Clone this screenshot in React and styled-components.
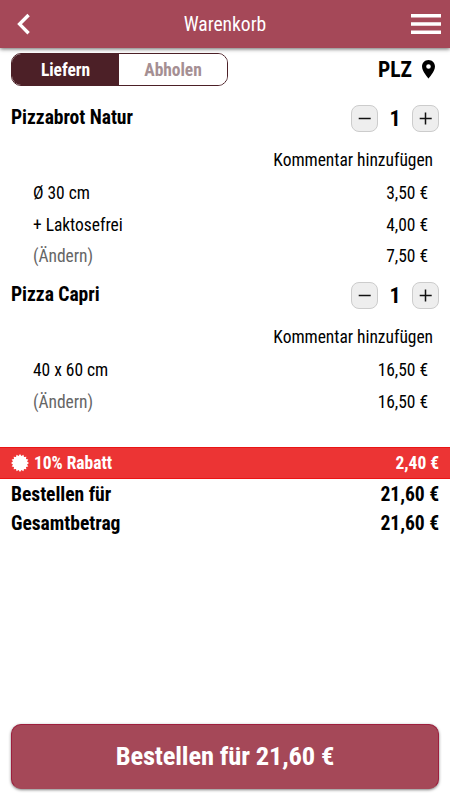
import styled, { createGlobalStyle } from 'styled-components';

const items = [
    {
        name: 'Pizzabrot Natur',
        amount: 1,
        lines: [
            { label: 'Ø 30 cm', price: '3,50 €' },
            { label: '+ Laktosefrei', price: '4,00 €' },
        ],
        total: '7,50 €',
    },
    {
        name: 'Pizza Capri',
        amount: 1,
        lines: [{ label: '40 x 60 cm', price: '16,50 €' }],
        total: '16,50 €',
    },
];

function CartItem({ item }) {
    return (
        <Item>
            <ItemHead>
                <ItemName>{item.name}</ItemName>
                <Stepper>
                    <StepButton aria-label="weniger">
                        <svg width="25" height="25" viewBox="0 0 25 25" stroke="#111" strokeWidth="1.5">
                            <path d="M6.7 12.5h12" />
                        </svg>
                    </StepButton>
                    <Amount>{item.amount}</Amount>
                    <StepButton aria-label="mehr">
                        <svg width="25" height="25" viewBox="0 0 25 25" stroke="#111" strokeWidth="1.5">
                            <path d="M6.7 12.5h12M12.5 6.5v12" />
                        </svg>
                    </StepButton>
                </Stepper>
            </ItemHead>
            <Comment>Kommentar hinzufügen</Comment>
            {item.lines.map((line) => (
                <Line key={line.label}>
                    <span>{line.label}</span>
                    <span>{line.price}</span>
                </Line>
            ))}
            <Line>
                <Change>(Ändern)</Change>
                <span>{item.total}</span>
            </Line>
        </Item>
    );
}

export default function App() {
    return (
        <Page>
            <GlobalStyle />
            <Header>
                <IconButton aria-label="zurück">
                    <svg width="14" height="22" viewBox="0 0 14 22" fill="none" stroke="#fff" strokeWidth="3.4">
                        <path d="M11.6 2L2.6 11.1L11.6 20.2" />
                    </svg>
                </IconButton>
                <Title>Warenkorb</Title>
                <IconButton aria-label="Menü">
                    <svg width="30" height="20" viewBox="0 0 30 20" fill="#fff">
                        <path d="M0 0h30v3.4H0zM0 8.3h30v3.4H0zM0 16.6h30V20H0z" />
                    </svg>
                </IconButton>
            </Header>
            <Options>
                <Toggle>
                    <Tab $active>Liefern</Tab>
                    <Tab>Abholen</Tab>
                </Toggle>
                <Zip>
                    PLZ
                    <svg width="13" height="18.5" viewBox="0 0 14 20">
                        <path fillRule="evenodd" d="M7 0C3.1 0 0 3.1 0 7c0 5.2 7 13 7 13s7-7.8 7-13c0-3.9-3.1-7-7-7zm0 9.5a2.5 2.5 0 1 1 0-5 2.5 2.5 0 0 1 0 5z" />
                    </svg>
                </Zip>
            </Options>
            <Cart>
                {items.map((item) => (
                    <CartItem key={item.name} item={item} />
                ))}
            </Cart>
            <Discount>
                <svg width="18" height="18" viewBox="-9 -9 18 18" fill="#fff">
                    <polygon points={star} />
                </svg>
                <DiscountLabel>10% Rabatt</DiscountLabel>
                <span>2,40 €</span>
            </Discount>
            <Totals>
                <Sum>
                    <span>Bestellen für</span>
                    <span>21,60 €</span>
                </Sum>
                <Sum>
                    <span>Gesamtbetrag</span>
                    <span>21,60 €</span>
                </Sum>
            </Totals>
            <OrderButton>Bestellen für 21,60 €</OrderButton>
        </Page>
    );
}

// badge with 16 spikes
const star = Array.from({ length: 32 }, (_, i) => {
    const r = i % 2 ? 7.2 : 9;
    const a = (i * Math.PI) / 16;
    return `${(r * Math.sin(a)).toFixed(2)},${(-r * Math.cos(a)).toFixed(2)}`;
}).join(' ');

const GlobalStyle = createGlobalStyle`
    * {
        box-sizing: border-box;
    }

    body {
        margin: 0;
        background: #fff;
    }

    button {
        font: inherit;
        letter-spacing: inherit;
        padding: 0;
        border: none;
    }

    svg {
        display: block;
        flex: none;
    }
`;

const Page = styled.div`
    display: flex;
    flex-direction: column;
    height: 100vh;
    font-family: "Roboto Condensed", Roboto, sans-serif;
    font-stretch: 75%;
    font-size: 17.5px;
    letter-spacing: -0.04px;
    color: #000;
`;

const Header = styled.header`
    display: flex;
    align-items: center;
    justify-content: space-between;
    flex: none;
    height: 48px;
    padding: 0 9px 0 17px;
    background: #a54858;
    box-shadow: 0 1px 4px rgba(0, 0, 0, 0.6);
`;

const IconButton = styled.button`
    display: flex;
    flex: 1;
    background: none;

    &:last-child {
        justify-content: flex-end;
    }
`;

const Title = styled.div`
    margin-right: 8px;
    font-size: 19.6px;
    color: #fff;
`;

const Options = styled.div`
    display: flex;
    align-items: center;
    justify-content: space-between;
    height: 33px;
    margin: 5px 15px 0 11px;
`;

const Toggle = styled.div`
    display: flex;
    width: 217px;
    height: 33px;
    border: 1px solid #4c2027;
    border-radius: 10px;
    overflow: hidden;
`;

const Tab = styled.button`
    width: ${(props) => (props.$active ? '107px' : '108px')};
    font-weight: 700;
    background: ${(props) => (props.$active ? '#4c2027' : '#fff')};
    color: ${(props) => (props.$active ? '#fff' : '#a58f93')};
`;

const Zip = styled.div`
    display: flex;
    align-items: center;
    gap: 10px;
    font-size: 21.6px;
    font-weight: 700;
`;

const Cart = styled.div`
    height: 361px;
    padding-top: 14px;
`;

const Item = styled.section`
    padding: 0 11px;
    margin-bottom: 5.5px;
`;

const ItemHead = styled.div`
    display: flex;
    justify-content: space-between;
    height: 42px;
`;

const ItemName = styled.div`
    font-size: 19.6px;
    font-weight: 700;
    line-height: 36px;
`;

const Stepper = styled.div`
    display: flex;
    align-items: center;
    height: 37px;
`;

const StepButton = styled.button`
    display: flex;
    align-items: center;
    justify-content: center;
    width: 27px;
    height: 27px;
    border: 1px solid #ccc;
    border-radius: 8px;
    background: #eee;
`;

const Amount = styled.div`
    width: 34px;
    font-size: 22px;
    font-weight: 700;
    text-align: center;
`;

const Comment = styled.div`
    height: 35px;
    padding-right: 6px;
    line-height: 37px;
    text-align: right;
`;

const Line = styled.div`
    display: flex;
    justify-content: space-between;
    height: 31.5px;
    padding: 0 11px 0 22px;
    line-height: 33px;
`;

const Change = styled.span`
    color: #666;
`;

const Discount = styled.div`
    display: flex;
    align-items: center;
    flex: none;
    height: 32px;
    padding: 0 11px;
    border: solid #ea1515;
    border-width: 1px 0;
    background: #ec3434;
    color: #fff;
    font-weight: 700;
`;

const DiscountLabel = styled.span`
    flex: 1;
    margin-left: 5px;
`;

const Totals = styled.div`
    padding: 1px 11px 0;
`;

const Sum = styled.div`
    display: flex;
    justify-content: space-between;
    font-size: 19.6px;
    font-weight: 700;
    line-height: 29px;
`;

const OrderButton = styled.button`
    && {
        height: 65px;
        margin: auto 11px 11px;
        padding-bottom: 2px;
        border: 1px solid #9d1f3d;
        border-bottom-color: #a54858;
        border-radius: 10px;
        background: #a54858;
        box-shadow: 0 1px 3px rgba(0, 0, 0, 0.5);
        color: #fff;
        font-size: 26.5px;
        letter-spacing: -0.15px;
        font-weight: 700;
    }
`;
